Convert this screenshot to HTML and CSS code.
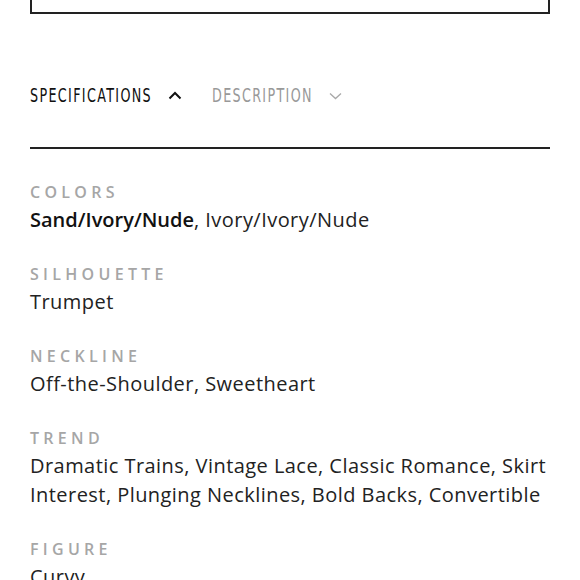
FILE: index.html
```html
<!DOCTYPE html>
<html lang="en">
<head>
<meta charset="utf-8">
<title>Specifications</title>
<link rel="stylesheet" href="styles.css">
</head>
<body>
<div class="page">
  <div class="box"></div>
  <div class="tabs">
    <div class="tab tab-active">
      <span class="tab-label tab-label-spec">SPECIFICATIONS</span>
      <svg class="chev" width="14" height="9" viewBox="0 0 14 9"><path d="M1.5 7.5 L7 2 L12.5 7.5" fill="none" stroke="#111" stroke-width="2"/></svg>
    </div>
    <div class="tab tab-muted">
      <span class="tab-label tab-label-desc">DESCRIPTION</span>
      <svg class="chev" width="13" height="9" viewBox="0 0 13 9"><path d="M1 2.5 L6.5 7.5 L12 2.5" fill="none" stroke="#a8a8a8" stroke-width="1.3"/></svg>
    </div>
  </div>
  <div class="rule"></div>
  <dl class="specs">
    <div class="spec">
      <dt class="spec-label">COLORS</dt>
      <dd class="spec-value"><strong>Sand/Ivory/Nude</strong>, Ivory/Ivory/Nude</dd>
    </div>
    <div class="spec">
      <dt class="spec-label">SILHOUETTE</dt>
      <dd class="spec-value">Trumpet</dd>
    </div>
    <div class="spec">
      <dt class="spec-label">NECKLINE</dt>
      <dd class="spec-value">Off-the-Shoulder, Sweetheart</dd>
    </div>
    <div class="spec">
      <dt class="spec-label">TREND</dt>
      <dd class="spec-value">Dramatic Trains, Vintage Lace, Classic Romance, Skirt Interest, Plunging Necklines, Bold Backs, Convertible</dd>
    </div>
    <div class="spec">
      <dt class="spec-label">FIGURE</dt>
      <dd class="spec-value">Curvy</dd>
    </div>
  </dl>
</div>
</body>
</html>
```
FILE: styles.css
```css
html, body {
  margin: 0;
  padding: 0;
  background: #fff;
}
.page {
  padding: 0 30px;
  font-family: "Open Sans", "Lato", sans-serif;
  color: #222;
}
.box {
  height: 12px;
  border: 2px solid #222;
  border-top: 0;
}
.tabs {
  display: flex;
  align-items: center;
  gap: 30px;
  margin-top: 66px;
  height: 30px;
}
.tab {
  display: flex;
  align-items: center;
  gap: 16px;
}
.tab-label {
  display: inline-block;
  font-family: "DejaVu Sans", sans-serif;
  font-size: 19px;
  line-height: 24px;
  letter-spacing: 2px;
  transform: scaleX(0.67);
  transform-origin: left center;
}
.tab-label-spec { margin-right: -60px; }
.tab-label-desc { margin-right: -50px; }
.tab-active .tab-label { color: #111; }
.tab-muted .tab-label { color: #999; }
.rule {
  margin-top: 37px;
  height: 2px;
  background: #222;
}
.specs {
  margin: 33px 0 0;
}
.spec {
  margin-bottom: 30px;
}
.spec-label {
  font-size: 16px;
  line-height: 20px;
  letter-spacing: 4.3px;
  color: #a6a6a6;
  font-weight: 600;
}
.spec-value {
  margin: 3px 0 0;
  font-size: 20px;
  line-height: 29px;
  letter-spacing: 0.45px;
  color: #222;
}
.spec-value strong {
  font-weight: 600;
  letter-spacing: 0;
  color: #111;
}
```
